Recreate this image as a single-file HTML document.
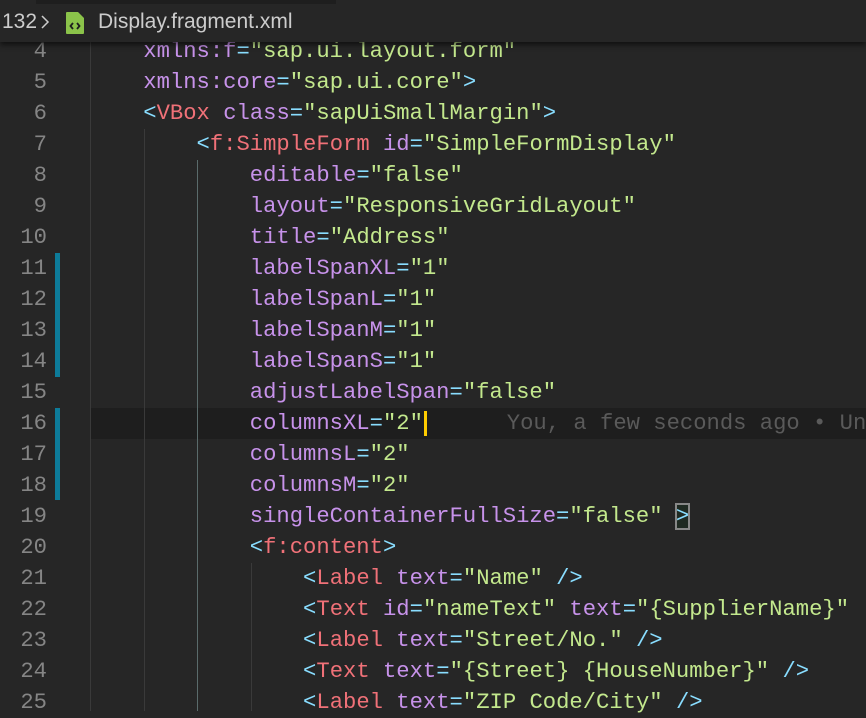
<!DOCTYPE html>
<html><head><meta charset="utf-8"><style>
body{margin:0;width:866px;height:711px;overflow:hidden;background:#262626;font-family:"Liberation Mono",monospace;}
.hdr{position:absolute;left:0;top:0;width:866px;height:42px;background:#262626;box-shadow:0 3px 5px rgba(0,0,0,.55);z-index:5;font-family:"Liberation Sans",sans-serif;font-size:21px;color:#cccccc;overflow:hidden}
.tabtop{position:absolute;top:0;height:4px;background:#1e1e1e}
.line{position:absolute;left:0;width:866px;height:31px;font-size:22.2px;line-height:31px;white-space:pre;overflow:hidden}
.num{position:absolute;left:0;width:47px;text-align:right;color:#858585}
.code{position:absolute;left:90px}
.t{color:#f07178}.a{color:#c792ea}.s{color:#c3e88d}.p{color:#89ddff}.w{color:#d4d4d4}
.guide{position:absolute;width:1px;background:#3a3a3a}
.bar{position:absolute;left:55px;width:5px;background:#0d7b99}
</style></head><body>
<div class="hdr">
<div class="tabtop" style="left:36px;width:300px"></div>
<span style="position:absolute;left:2px;top:10px">132</span>
<svg style="position:absolute;left:40px;top:15px" width="10" height="14" viewBox="0 0 10 14"><path d="M2 1l6 6-6 6" stroke="#cccccc" stroke-width="1.5" fill="none"/></svg>
<svg style="position:absolute;left:66px;top:12px" width="18" height="22" viewBox="0 0 18 22"><path d="M1 0h11l6 6v15a1 1 0 0 1-1 1H1a1 1 0 0 1-1-1V1a1 1 0 0 1 1-1z" fill="#8bc34a"/><path d="M7 11l-2.5 3 2.5 3M11 11l2.5 3-2.5 3" stroke="#1e1e1e" stroke-width="1.8" fill="none"/></svg>
<span style="position:absolute;left:98px;top:10px">Display.fragment.xml</span>
</div>
<div style="position:absolute;left:91px;top:408px;width:775px;height:31px;background:#1e1e1e"></div>
<div class="guide" style="left:90px;top:36px;height:675px"></div>
<div class="guide" style="left:144px;top:129px;height:582px"></div>
<div class="guide" style="left:197px;top:160px;height:551px;background:#5a6b6b"></div>
<div class="guide" style="left:251px;top:563px;height:148px"></div>
<div class="bar" style="top:253px;height:124px"></div>
<div class="bar" style="top:408px;height:92px"></div>
<div id="c"></div>
<script>
var L=[
[4,'          <a>xmlns:f</a><p>=</p><s>"sap.ui.layout.form"</s>'],
[5,'          <a>xmlns:core</a><p>=</p><s>"sap.ui.core"</s><p>></p>'],
[6,'          <p>&lt;</p><t>VBox</t> <a>class</a><p>=</p><s>"sapUiSmallMargin"</s><p>></p>'],
[7,'              <p>&lt;</p><t>f:SimpleForm</t> <a>id</a><p>=</p><s>"SimpleFormDisplay"</s>'],
[8,'                  <a>editable</a><p>=</p><s>"false"</s>'],
[9,'                  <a>layout</a><p>=</p><s>"ResponsiveGridLayout"</s>'],
[10,'                  <a>title</a><p>=</p><s>"Address"</s>'],
[11,'                  <a>labelSpanXL</a><p>=</p><s>"1"</s>'],
[12,'                  <a>labelSpanL</a><p>=</p><s>"1"</s>'],
[13,'                  <a>labelSpanM</a><p>=</p><s>"1"</s>'],
[14,'                  <a>labelSpanS</a><p>=</p><s>"1"</s>'],
[15,'                  <a>adjustLabelSpan</a><p>=</p><s>"false"</s>'],
[16,'                  <a>columnsXL</a><p>=</p><s>"2"</s><span style="border-left:3px solid #ffcc00;margin-left:1px"></span>      <span style="color:#5a5a5a">You, a few seconds ago • Un</span>'],
[17,'                  <a>columnsL</a><p>=</p><s>"2"</s>'],
[18,'                  <a>columnsM</a><p>=</p><s>"2"</s>'],
[19,'                  <a>singleContainerFullSize</a><p>=</p><s>"false"</s> <p style="outline:2px solid #888;outline-offset:-1px;background:#1f2a22">></p>'],
[20,'                  <p>&lt;</p><t>f:content</t><p>></p>'],
[21,'                      <p>&lt;</p><t>Label</t> <a>text</a><p>=</p><s>"Name"</s> <p>/></p>'],
[22,'                      <p>&lt;</p><t>Text</t> <a>id</a><p>=</p><s>"nameText"</s> <a>text</a><p>=</p><s>"{SupplierName}"</s>'],
[23,'                      <p>&lt;</p><t>Label</t> <a>text</a><p>=</p><s>"Street/No."</s> <p>/></p>'],
[24,'                      <p>&lt;</p><t>Text</t> <a>text</a><p>=</p><s>"{Street} {HouseNumber}"</s> <p>/></p>'],
[25,'                      <p>&lt;</p><t>Label</t> <a>text</a><p>=</p><s>"ZIP Code/City"</s> <p>/></p>']];
var h='';L.forEach(function(l){var top=36+(l[0]-4)*31;
var c=l[1].replace(/^ {10}/,'').replace(/<(\/?)([atsp])( |>)/g,function(m,s,t,e){return s?'</span>':'<span class="'+t+'"'+e;});
h+='<div class="line" style="top:'+top+'px"><span class="num">'+l[0]+'</span><span class="code">    '+c+'</span></div>';});
document.getElementById('c').innerHTML=h;
</script>
</body></html>
